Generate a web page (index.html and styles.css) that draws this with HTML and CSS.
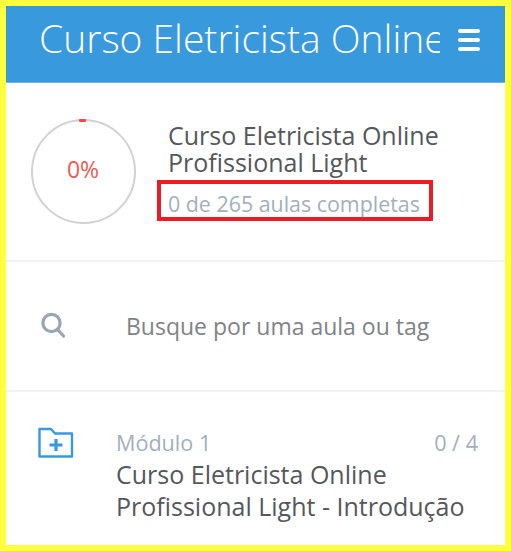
FILE: index.html
```html
<!DOCTYPE html>
<html lang="en">
<head>
  <meta charset="UTF-8">
  <meta name="viewport" content="width=device-width, initial-scale=1">
  <title>Curso Eletricista Online</title>
  <link rel="stylesheet" href="styles.css">
</head>
<body>
  <div class="frame">
    <!-- HEADER -->
    <header class="topbar">
      <div class="topbar-title">Curso Eletricista Online Profissional Light</div>
      <div class="burger">
        <span></span>
        <span></span>
        <span></span>
      </div>
    </header>

    <!-- COURSE PROGRESS -->
    <section class="course">
      <div class="progress">
        <span class="progress-dot"></span>
        <span class="progress-value">0%</span>
      </div>
      <div class="course-info">
        <h1>Curso Eletricista Online Profissional Light</h1>
        <p class="course-count">0 de 265 aulas completas</p>
      </div>
    </section>

    <!-- SEARCH -->
    <section class="search">
      <svg class="search-icon" width="25" height="26" viewBox="0 0 25 26">
        <circle cx="10.5" cy="11" r="8.6" fill="none" stroke="#98a6b5" stroke-width="3.2"/>
        <path d="M16.5 17.5 L22.5 24" stroke="#98a6b5" stroke-width="3.2" stroke-linecap="round"/>
      </svg>
      <span class="search-text">Busque por uma aula ou tag</span>
    </section>

    <!-- MODULE -->
    <section class="module">
      <svg class="module-icon" width="36" height="32" viewBox="0 0 36 32">
        <path d="M1.5 2 H13 L17 6.5 H34 V29.5 H1.5 Z" fill="none" stroke="#3899dd" stroke-width="2.4" stroke-linejoin="round"/>
        <path d="M18 12 V24 M11.5 18 H24.5" stroke="#3899dd" stroke-width="3.2"/>
      </svg>
      <div class="module-info">
        <div class="module-head">
          <span>Módulo 1</span>
          <span>0 / 4</span>
        </div>
        <h2>Curso Eletricista Online Profissional Light - Introdução</h2>
      </div>
    </section>
  </div>
</body>
</html>
```

FILE: styles.css
```css
* {
  box-sizing: border-box;
}
html, body {
  margin: 0;
  padding: 0;
}
body {
  font-family: "Open Sans", Arial, sans-serif;
  background: #fff;
}
.frame {
  width: 511px;
  height: 551px;
  border: 6px solid #ffff40;
  overflow: hidden;
  background: #fff;
}

/* HEADER */
.topbar {
  display: flex;
  align-items: flex-start;
  height: 77px;
  padding: 7px 25px 0 33px;
  background: #3899dd;
  border-bottom: 1px solid #6db3e6;
}
.topbar-title {
  width: 401px;
  overflow: hidden;
  white-space: nowrap;
  font-size: 39px;
  font-weight: 300;
  line-height: 50px;
  color: #fff;
}
.burger {
  display: flex;
  flex-direction: column;
  gap: 5px;
  width: 22px;
  margin: 16px 0 0 18px;
}
.burger span {
  height: 4px;
  border-radius: 2px;
  background: #fff;
}

/* COURSE PROGRESS */
.course {
  display: flex;
  height: 179px;
  padding: 36px 0 0 25px;
  border-bottom: 2px solid #eef1f5;
}
.progress {
  position: relative;
  flex: none;
  display: flex;
  align-items: center;
  justify-content: center;
  width: 105px;
  height: 105px;
  border: 2px solid #d2d2d2;
  border-radius: 50%;
  font-size: 23px;
  color: #ee5a50;
}
.progress-value {
  margin: 0 1px 6px 0;
}
.progress-dot {
  position: absolute;
  top: -2px;
  left: 46px;
  width: 7px;
  height: 3px;
  border-radius: 1px;
  background: #ef4a42;
}
.course-info {
  margin: 3px 0 0 21px;
}
.course-info h1 {
  margin: 0 0 0 11px;
  font-size: 25px;
  font-weight: 400;
  line-height: 27px;
  color: #55585b;
}
.course-count {
  width: 276px;
  height: 41px;
  margin: 4px 0 0;
  padding-left: 7px;
  border: 4px solid #ed1c24;
  font-size: 21.4px;
  line-height: 39px;
  color: #a2afbd;
}

/* SEARCH */
.search {
  display: flex;
  align-items: center;
  height: 130px;
  padding: 0 0 2px 35px;
  border-bottom: 2px solid #eef1f5;
}
.search-icon {
  flex: none;
}
.search-text {
  margin: 2px 0 0 60px;
  font-size: 23px;
  color: #808386;
}

/* MODULE */
.module {
  display: flex;
  padding: 35px 27px 0 32px;
}
.module-icon {
  flex: none;
}
.module-info {
  flex: 1;
  margin: 1px 0 0 42px;
}
.module-head {
  display: flex;
  justify-content: space-between;
  font-size: 21.6px;
  line-height: 30px;
  color: #a2afbd;
}
.module-info h2 {
  margin: 0;
  font-size: 25px;
  font-weight: 400;
  line-height: 32px;
  color: #55585b;
}
```
